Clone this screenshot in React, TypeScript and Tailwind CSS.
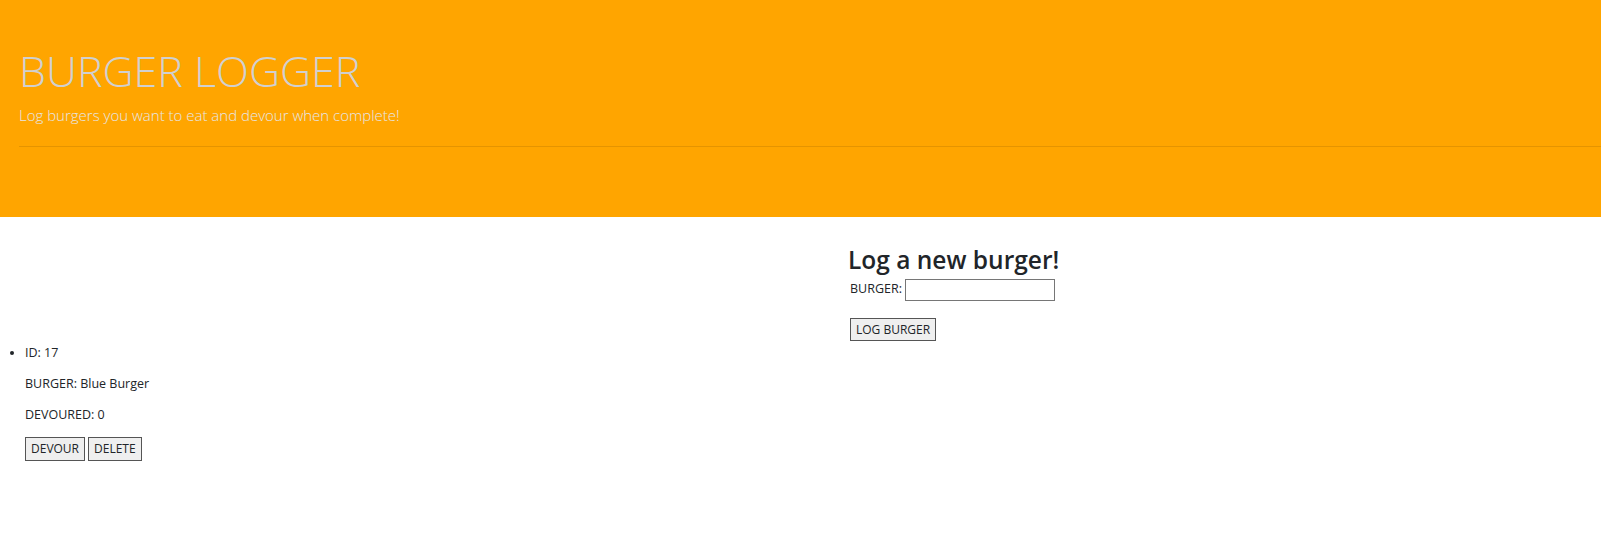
const burgers = [{ id: 17, name: "Blue Burger", devoured: 0 }];

const App = () => {
  return (
    <div className="min-h-[560px] bg-white font-['Open_Sans',sans-serif] text-[#212529]">
      {/* jumbotron */}
      <div className="h-[217px] bg-[#ffa500] pl-[19px] pt-[45px]">
        <h1 className="text-[43px] leading-[52px] font-light text-[#d0d0d0]">BURGER LOGGER</h1>
        <p className="mt-[7px] text-[15px] leading-[22px] font-light text-[#e6e6e6]">
          Log burgers you want to eat and devour when complete!
        </p>
        <hr className="mt-[20px] border-t border-black/10" />
      </div>

      <div className="flex">
        {/* burger list */}
        <div className="w-[836px] pt-[127px]">
          <ul className="list-disc pl-[25px] text-[12.5px] leading-[18px]">
            {burgers.map((b) => (
              <li key={b.id}>
                <p>ID: {b.id}</p>
                <p className="mt-[13px]">BURGER: {b.name}</p>
                <p className="mt-[13px]">DEVOURED: {b.devoured}</p>
                <div className="mt-[13px] flex gap-[3px]">
                  <button className="h-[24px] border border-[#555] bg-[#efefef] px-[5px] text-[12px]">DEVOUR</button>
                  <button className="h-[24px] border border-[#555] bg-[#efefef] px-[5px] text-[12px]">DELETE</button>
                </div>
              </li>
            ))}
          </ul>
        </div>

        {/* new burger form */}
        <div className="pl-[12px] pt-[28px]">
          <h2 className="text-[24.5px] leading-[30px] font-semibold">Log a new burger!</h2>
          <form className="pl-[2px]">
            <label className="text-[12.5px]">
              BURGER:{" "}
              <input type="text" className="h-[22px] w-[150px] border border-[#767676] px-1 align-middle" />
            </label>
            <div className="mt-[15px]">
              <button type="button" className="h-[23px] border border-[#555] bg-[#efefef] px-[5px] text-[12px]">
                LOG BURGER
              </button>
            </div>
          </form>
        </div>
      </div>
    </div>
  );
};

export default App;
